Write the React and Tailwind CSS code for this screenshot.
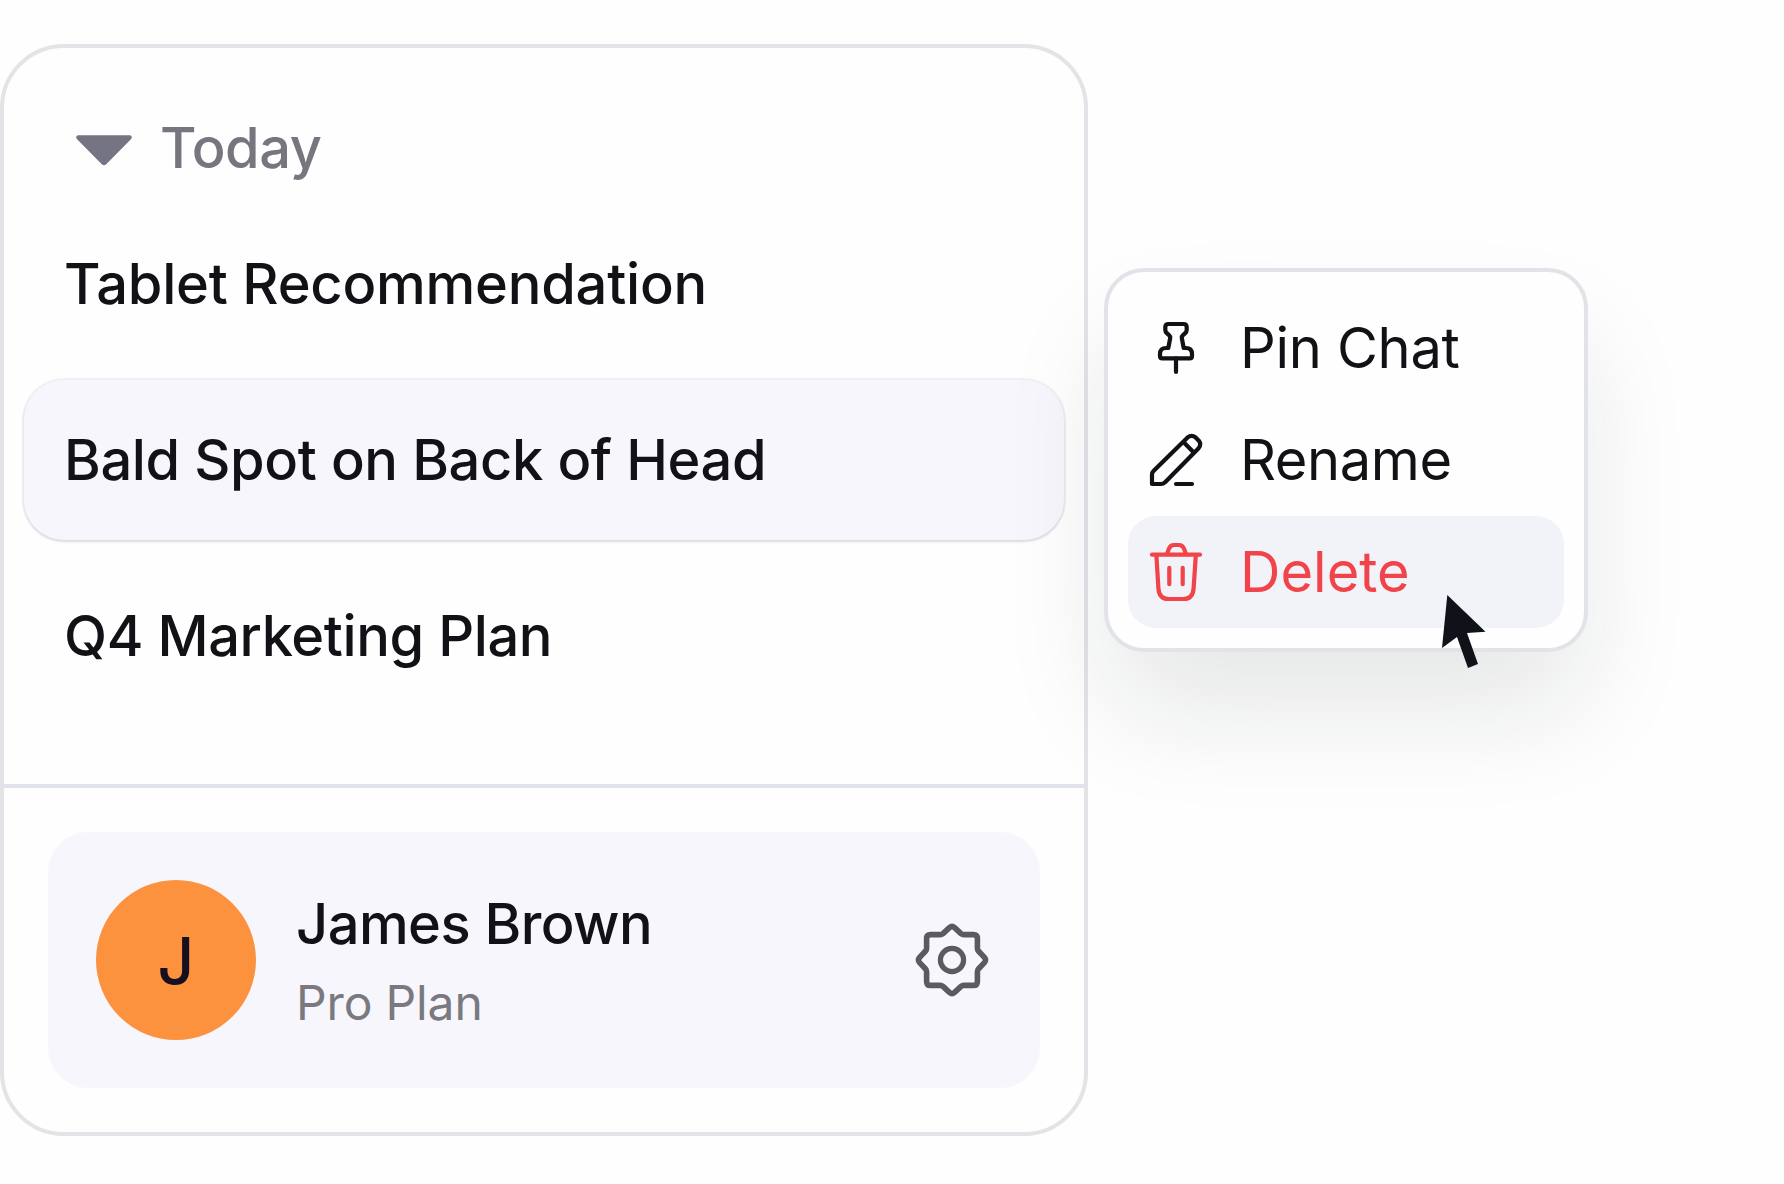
const CHATS = [
  { id: 1, title: 'Tablet Recommendation', tracking: 'tracking-[-0.22px]' },
  { id: 2, title: 'Bald Spot on Back of Head', tracking: 'tracking-[-0.39px]' },
  { id: 3, title: 'Q4 Marketing Plan', tracking: 'tracking-[-0.41px]' },
];

const ACTIVE_CHAT = 2;

const PinIcon = () => (
  <>
    <path d="M-7.5 -24H7.5Q10.7 -24 10.7 -20.8V-18.3Q10.7 -16.2 9.2 -14.8L7 -12.9Q5.6 -11.7 5.8 -10L7.7 0H10Q16 0 16 6V8Q16 10.4 13.6 10.4H-13.6Q-16 10.4 -16 8V6Q-16 0 -10 0H-7.7L-5.8 -10Q-5.6 -11.7 -7 -12.9L-9.2 -14.8Q-10.7 -16.2 -10.7 -18.3V-20.8Q-10.7 -24 -7.5 -24Z" />
    <path d="M0 10.4V24" />
  </>
);

const PencilIcon = () => (
  <>
    <path d="M-24 24V14.5Q-24 12.4 -22.5 10.9L11.6 -22.6Q15.6 -25.8 19.6 -22.6L22.6 -19.6Q25.8 -15.6 22.6 -11.8L-10.9 22.2Q-12.7 24 -15.2 24Z" />
    <path d="M7.7 -17.7L17.3 -8M0 24H16" />
  </>
);

const TrashIcon = () => (
  <>
    <path d="M-24 -17.3H24" />
    <path d="M-9 -17.8L-7.2 -23Q-5.8 -27 -2 -27H3Q6.6 -27 8.2 -23L10 -17.8" />
    <path d="M-19.6 -16.5L-17.6 16.5Q-16.8 27 -7.5 27H7.5Q16.8 27 17.6 16.5L19.8 -16.5" />
    <path d="M-6.7 -4.2V12.2M6.7 -4.2V12.2" />
  </>
);

const MENU_ITEMS = [
  { label: 'Pin Chat', Icon: PinIcon, tracking: 'tracking-[-0.3px]' },
  { label: 'Rename', Icon: PencilIcon, tracking: 'tracking-[-0.4px]' },
  { label: 'Delete', Icon: TrashIcon, tracking: 'tracking-normal', danger: true },
];

const GearIcon = () => (
  <svg
    viewBox="-40 -40 80 80"
    className="size-20 shrink-0 text-[#5b5a60]"
    fill="none"
    stroke="currentColor"
    strokeWidth="5.6"
    strokeLinejoin="round"
  >
    <circle r="11.6" strokeWidth="5.2" />
    <path d="M-2.6 -32.4Q0 -34.6 2.6 -32.4L9 -26.4Q10.2 -25.4 11.8 -25.4H21.4Q25.4 -25.4 25.4 -21.4V-11.8Q25.4 -10.2 26.4 -9L32.4 -2.6Q34.6 0 32.4 2.6L26.4 9Q25.4 10.2 25.4 11.8V21.4Q25.4 25.4 21.4 25.4H11.8Q10.2 25.4 9 26.4L2.6 32.4Q0 34.6 -2.6 32.4L-9 26.4Q-10.2 25.4 -11.8 25.4H-21.4Q-25.4 25.4 -25.4 21.4V11.8Q-25.4 10.2 -26.4 9L-32.4 2.6Q-34.6 0 -32.4 -2.6L-26.4 -9Q-25.4 -10.2 -25.4 -11.8V-21.4Q-25.4 -25.4 -21.4 -25.4H-11.8Q-10.2 -25.4 -9 -26.4Z" />
  </svg>
);

const Sidebar = () => (
  <aside className="flex h-[1092px] w-[1088px] shrink-0 flex-col rounded-[64px] border-4 border-[#e3e3e8] bg-[#fefefe]">
    {/* Chat history */}
    <div className="flex-1 px-5 pt-11">
      <div className="flex h-28 items-center gap-7 pl-[52px] text-[56px] font-medium tracking-[-0.45px] text-[#78757f]">
        <svg viewBox="0 0 56 32" className="mt-1.5 h-8 w-14 text-[#747482]" fill="currentColor">
          <path d="M2.2 0.3H53.8Q55.6 0.3 55.8 2Q55.9 3.2 54.9 4.2L30.2 29.3Q28 31.4 25.8 29.3L1.1 4.2Q0.1 3.2 0.2 2Q0.4 0.3 2.2 0.3Z" />
        </svg>
        Today
      </div>
      <ul className="flex flex-col gap-4">
        {CHATS.map((chat) => (
          <li
            key={chat.id}
            className={`flex h-40 items-center rounded-[40px] px-10 text-[56px] font-medium ${chat.tracking} ${
              chat.id === ACTIVE_CHAT
                ? 'bg-[#f7f6fc] shadow-[0_0_1px_2px_rgba(20,15,30,0.06),0_2px_3px_rgba(20,20,50,0.09)]'
                : ''
            }`}
          >
            {chat.title}
          </li>
        ))}
      </ul>
    </div>

    {/* Account */}
    <div className="border-t-4 border-[#e1e3ec] px-11 pt-11 pb-11">
      <div className="flex h-64 items-center gap-10 rounded-[40px] bg-[#f7f6fc] px-12">
        <div className="flex size-40 items-center justify-center rounded-full bg-[#fc923e] pt-0.5 text-[64px] font-medium text-[#150f20]">
          J
        </div>
        <div className="flex-1">
          <p className="text-[56px] leading-[84px] font-medium tracking-[-0.55px]">James Brown</p>
          <p className="pt-px text-5xl leading-[72px] tracking-[-0.15px] text-[#7a797f]">Pro Plan</p>
        </div>
        <GearIcon />
      </div>
    </div>
  </aside>
);

const ContextMenu = () => (
  <div className="relative mt-56 ml-4 w-[484px] shrink-0 rounded-[40px] border-4 border-[#e2e2e9] bg-[#fefefe] p-5 shadow-[0_64px_112px_-6px_rgba(20,30,25,0.1)]">
    {MENU_ITEMS.map(({ label, Icon, tracking, danger }) => (
      <button
        key={label}
        className={`flex h-28 w-full items-center gap-8 rounded-[28px] px-4 text-[56px] ${tracking} ${
          danger ? 'bg-[#f2f3f9] text-[#f0444a]' : ''
        }`}
      >
        <svg
          viewBox="-32 -32 64 64"
          className="size-16 shrink-0"
          fill="none"
          stroke="currentColor"
          strokeWidth="4.2"
          strokeLinecap="round"
          strokeLinejoin="round"
        >
          <Icon />
        </svg>
        {label}
      </button>
    ))}

    {/* Mouse pointer over Delete */}
    <svg viewBox="0 0 44 74" className="absolute top-[323px] left-[334px] h-[74px] w-11 text-[#10121a]" fill="currentColor">
      <path d="M5.3 0L43.5 36.7L25 38L36 69L26 73L15 42L0 53Z" />
    </svg>
  </div>
);

export default function App() {
  return (
    <main className="flex h-[1184px] w-[1784px] items-start overflow-hidden bg-[#fefefe] pt-11 font-[Inter,sans-serif] text-[#121116]">
      <Sidebar />
      <ContextMenu />
    </main>
  );
}
